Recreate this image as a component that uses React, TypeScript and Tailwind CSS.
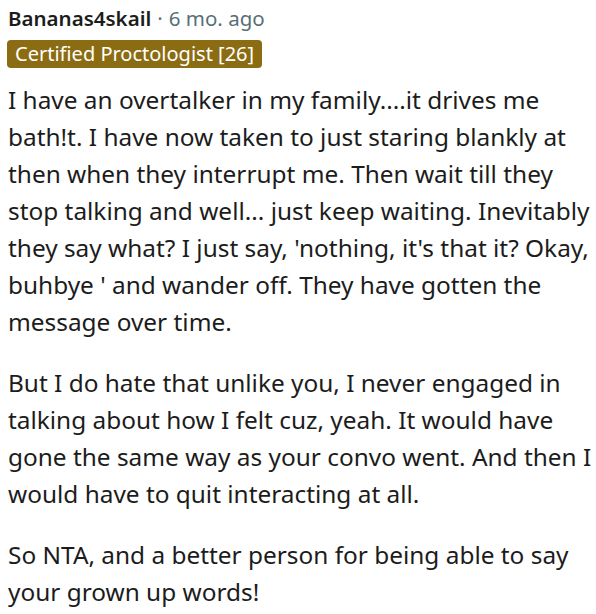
const paras: string[][] = [
  [
    "I have an overtalker in my family....it drives me",
    "bath!t. I have now taken to just staring blankly at",
    "then when they interrupt me. Then wait till they",
    "stop talking and well... just keep waiting. Inevitably",
    "they say what? I just say, 'nothing, it's that it? Okay,",
    "buhbye ' and wander off. They have gotten the",
    "message over time.",
  ],
  [
    "But I do hate that unlike you, I never engaged in",
    "talking about how I felt cuz, yeah. It would have",
    "gone the same way as your convo went. And then I",
    "would have to quit interacting at all.",
  ],
  ["So NTA, and a better person for being able to say", "your grown up words!"],
];

export default function App() {
  return (
    <div className="w-[596px] h-[614px] bg-white overflow-hidden px-2 pt-[4px]">
      <div className="flex items-center gap-[6px] text-[20.5px] leading-[28px] [font-family:'Noto_Sans',sans-serif]">
        <span className="font-semibold text-[#1c1c1c]">Bananas4skail</span>
        <span className="text-[#576f76]">·</span>
        <span className="text-[#576f76]">6 mo. ago</span>
      </div>
      <div className="mt-[8px] -ml-px inline-flex items-center rounded-[4px] bg-[#8b6c12] px-[8px] h-[28px] leading-[28px] text-[20px] text-white [font-family:'Noto_Sans',sans-serif]">
        Certified Proctologist [26]
      </div>
      <div className="[font-family:'Noto_Sans',sans-serif] text-[24.4px] leading-[37px] text-[#1c1c1c] mt-[13px] flex flex-col gap-[24px]">
        {paras.map((lines, i) => (
          <p key={i}>
            {lines.map((l, j) => (
              <span key={j} className="block whitespace-nowrap">
                {l}
              </span>
            ))}
          </p>
        ))}
      </div>
    </div>
  );
}
